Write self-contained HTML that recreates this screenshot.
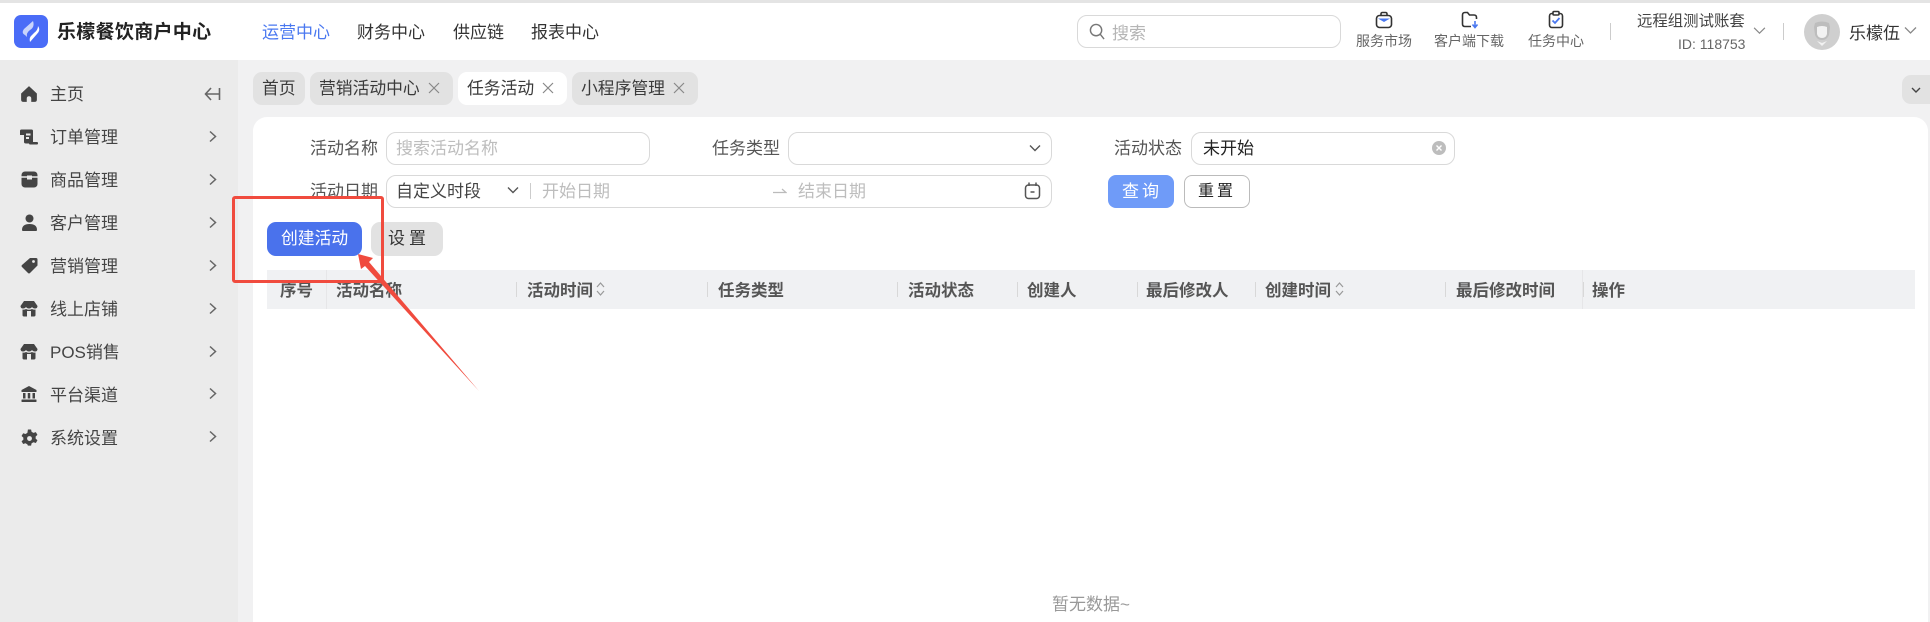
<!DOCTYPE html>
<html lang="zh"><head><meta charset="utf-8"><title>乐檬餐饮商户中心</title>
<style>
html,body{margin:0;padding:0;width:1930px;height:622px;overflow:hidden;background:#f1f1f2}
body{position:relative;font-family:"Liberation Sans","Noto Sans CJK SC",sans-serif;color:#333}
div,span,svg{position:absolute;box-sizing:border-box}
.t{white-space:nowrap;line-height:20px;height:20px;font-size:17px;margin-top:1px}
.side{font-size:17px;color:#444;left:50px}
.nav{font-size:17px;color:#333;top:22px}
.tab{top:72px;height:33px;background:#e2e2e2;border-radius:9px}
.tt{top:78px;font-size:16.800px;color:#3a3a3a}
.x{top:81px;width:14px;height:14px}
.lab{font-size:17px;color:#555}
.box{background:#fff;border:1px solid #d9d9d9;border-radius:10px}
.ph{color:#bdbdbd;font-size:17px}
.hd{top:280px;font-size:16.500px;font-weight:700;color:#555}
.dv{top:282px;width:1px;height:15px;background:#d8d8d8}
.ic{font-size:14px;color:#666;top:31px;margin-top:0}
</style></head><body>
<div style="left:0;top:0;width:1930px;height:3px;background:#e4e4e4"></div>
<div style="left:0;top:3px;width:1930px;height:57px;background:#fff"></div>
<div style="left:0;top:60px;width:238px;height:562px;background:#ebebeb"></div>

<!-- logo -->
<svg style="left:14px;top:15px" width="34" height="33" viewBox="0 0 34 33"><rect width="34" height="33" rx="7" fill="#4a6cf7"/><path d="M19 6 L10 14 Q7 18 11 20 L13 22 Q12 18 16 15 Q21 12 19 6Z" fill="#c9d4fb"/><path d="M24 11 Q27 15 23 19 L16 27 Q15 23 17 21 L20 18 Q24 15 24 11Z" fill="#fff"/></svg>
<span class="t" style="left:57px;top:22px;font-size:19px;font-weight:700;color:#222;letter-spacing:.3px">乐檬餐饮商户中心</span>
<span class="t nav" style="left:262px;color:#4a78f0">运营中心</span>
<span class="t nav" style="left:357px">财务中心</span>
<span class="t nav" style="left:453px">供应链</span>
<span class="t nav" style="left:531px">报表中心</span>

<!-- search -->
<div class="box" style="left:1077px;top:15px;width:264px;height:33px"></div>
<svg style="left:1089px;top:23px" width="16" height="17" viewBox="0 0 17 18" fill="none" stroke="#777" stroke-width="1.500"><circle cx="7.500" cy="7.500" r="6"/><path d="M12 12l4 5"/></svg>
<span class="t ph" style="left:1112px;top:23px;color:#b5b5b5">搜索</span>

<!-- top icons -->
<svg style="left:1375px;top:11px" width="18" height="18" viewBox="0 0 18 18" fill="none" stroke="#333" stroke-width="1.600"><rect x="1.500" y="4.500" width="15" height="12" rx="3"/><path d="M6 4.500V3q0-1.500 1.500-1.500h3Q12 1.500 12 3v1.500"/><path d="M3 7.500h12L9 11z" fill="#4a78f0" stroke="none"/></svg>
<span class="t ic" style="left:1356px">服务市场</span>
<svg style="left:1461px;top:11px" width="18" height="18" viewBox="0 0 18 18" fill="none" stroke="#333" stroke-width="1.600"><path d="M10 15.500H4q-2.500 0-2.500-2.500V4q0-2.500 2.500-2.500h2.500L8.500 4H13q2.500 0 2.500 2.500V8"/><path d="M14 10v6M11.500 13.500L14 16.500l2.500-3" stroke="#4a78f0"/></svg>
<span class="t ic" style="left:1434px">客户端下载</span>
<svg style="left:1547px;top:10px" width="18" height="19" viewBox="0 0 18 19" fill="none" stroke="#333" stroke-width="1.600"><rect x="2.500" y="3.500" width="13" height="14" rx="2.500"/><rect x="6" y="1.500" width="6" height="3.500" rx="1" fill="#fff"/><path d="M5.500 10.500l2.500 2.500 4.500-5" stroke="#4a78f0" stroke-width="1.800"/></svg>
<span class="t ic" style="left:1528px">任务中心</span>
<div style="left:1610px;top:23px;width:1px;height:17px;background:#ccc"></div>
<span class="t" style="left:1637px;top:11px;font-size:15.400px;color:#444">远程组测试账套</span>
<span class="t" style="left:1678px;top:34px;margin-top:0;font-size:14px;color:#666;width:67px;text-align:right">ID: 118753</span>
<svg style="left:1753px;top:26px" width="13" height="9" viewBox="0 0 14 10" fill="none" stroke="#888" stroke-width="1.300"><path d="M1 2l6 6 6-6"/></svg>
<div style="left:1783px;top:23px;width:1px;height:17px;background:#ccc"></div>
<svg style="left:1804px;top:14px" width="36" height="36" viewBox="0 0 36 36"><circle cx="18" cy="18" r="18" fill="#cfcfcf"/><path d="M11 9q7-3 14 0l1 4-1 8q-2 5-7 5t-7-5l-1-8z" fill="#bdbdbd"/><path d="M13 13q5-2 10 0v7q-1 4-5 4t-5-4z" fill="#f2f2f2"/><path d="M13 27l5 5 5-5-5 2z" fill="#f2f2f2"/></svg>
<span class="t" style="left:1849px;top:24px;margin-top:0;font-size:17px;color:#333">乐檬伍</span>
<svg style="left:1904px;top:26px" width="13" height="9" viewBox="0 0 13 9" fill="none" stroke="#888" stroke-width="1.300"><path d="M1 1.500l5.500 5.500 5.500-5.500"/></svg>

<!-- sidebar -->
<svg style="left:20px;top:85px" width="18" height="18" viewBox="0 0 16 16"><path d="M8 1L1 7.500V13q0 2 2 2h3v-3q0-2 2-2t2 2v3h3q2 0 2-2V7.500z" fill="#444"/></svg>
<span class="t side" style="top:84px">主页</span>
<svg style="left:204px;top:87px" width="17" height="14" viewBox="0 0 17 14" fill="none" stroke="#666" stroke-width="1.600"><path d="M7 1L1.500 7 7 13M1.500 7H15M15.500 1v12"/></svg>

<svg style="left:19px;top:129px" width="20" height="17" viewBox="0 0 20 17"><path d="M1 2q0-1.500 1.500-1.500h10q1.500 0 1.500 1.500v11q0 1.500 2 1.500H7q-2 0-2-1.500V6H1z" fill="#444"/><path d="M7 4.500h4.500v2H7zM7 8h3v2H7z" fill="#ebebeb"/><rect x="10" y="13" width="9" height="2.500" rx="1" fill="#444"/></svg>
<span class="t side" style="top:127px">订单管理</span>
<svg style="left:21px;top:171px" width="17" height="17" viewBox="0 0 17 17"><rect width="16" height="16" x=".5" y=".5" rx="3.500" fill="#444"/><path d="M.5 6h16" stroke="#ebebeb" stroke-width="1.500"/><rect x="6" y="4.500" width="5" height="4" fill="#ebebeb"/></svg>
<span class="t side" style="top:170px">商品管理</span>
<svg style="left:21px;top:214px" width="17" height="17" viewBox="0 0 17 17" fill="#444"><circle cx="8.500" cy="4.500" r="4"/><path d="M1 16q0-6 7.500-6t7.500 6q0 1-1 1H2q-1 0-1-1z"/></svg>
<span class="t side" style="top:213px">客户管理</span>
<svg style="left:21px;top:257px" width="17" height="17" viewBox="0 0 17 17"><path d="M9 1h6q1.500 0 1.500 1.500v6L9 16q-1 1-2 0L1 10q-1-1 0-2z" fill="#444"/><circle cx="12.500" cy="4.500" r="1.400" fill="#ebebeb"/></svg>
<span class="t side" style="top:256px">营销管理</span>
<svg style="left:20px;top:300px" width="18" height="17" viewBox="0 0 18 17"><path d="M4 1h10l3.500 5q0 2.500-2.500 2.500-2 0-3-1.500-1 1.500-3 1.500T6 7q-1 1.500-3 1.500Q.5 8.500.5 6z" fill="#444"/><path d="M2.500 9.500q2 .5 3.500-.5 3 1.500 6 0 1.500 1 3.500.5V15q0 1.500-1.500 1.500H4Q2.500 16.500 2.500 15z" fill="#444"/><rect x="7" y="11" width="4" height="5.500" fill="#ebebeb"/></svg>
<span class="t side" style="top:299px">线上店铺</span>
<svg style="left:20px;top:343px" width="18" height="17" viewBox="0 0 18 17"><path d="M4 1h10l3.500 5q0 2.500-2.500 2.500-2 0-3-1.500-1 1.500-3 1.500T6 7q-1 1.500-3 1.500Q.5 8.500.5 6z" fill="#444"/><path d="M2.500 9.500q2 .5 3.500-.5 3 1.500 6 0 1.500 1 3.500.5V15q0 1.500-1.500 1.500H4Q2.500 16.500 2.500 15z" fill="#444"/><rect x="7" y="11" width="4" height="5.500" fill="#ebebeb"/></svg>
<span class="t side" style="top:342px">POS销售</span>
<svg style="left:21px;top:386px" width="16" height="16" viewBox="0 0 16 16" fill="#444"><path d="M8 0L.5 4v2h15V4z"/><rect x="2" y="7" width="2.500" height="5.500"/><rect x="6.750" y="7" width="2.500" height="5.500"/><rect x="11.500" y="7" width="2.500" height="5.500"/><rect x=".5" y="13.500" width="15" height="2.500" rx=".5"/></svg>
<span class="t side" style="top:385px">平台渠道</span>
<svg style="left:21px;top:429px" width="17" height="18" viewBox="0 0 16 17"><path d="M6.500.5h3l.5 2.200 1.800 1 2.200-.7 1.500 2.600-1.700 1.500v2l1.700 1.500-1.500 2.600-2.200-.7-1.800 1-.5 2.200h-3L6 14.500l-1.800-1-2.200.7L.5 11.600l1.700-1.500v-2L.5 6.600 2 4l2.200.7 1.800-1z" fill="#444"/><circle cx="8" cy="9" r="2.300" fill="#ebebeb"/></svg>
<span class="t side" style="top:428px">系统设置</span>
<svg style="left:209px;top:130px" width="8" height="13" viewBox="0 0 8 12" fill="none" stroke="#666" stroke-width="1.500"><path d="M1 1l5.500 5L1 11"/></svg>
<svg style="left:209px;top:173px" width="8" height="13" viewBox="0 0 8 12" fill="none" stroke="#666" stroke-width="1.500"><path d="M1 1l5.500 5L1 11"/></svg>
<svg style="left:209px;top:216px" width="8" height="13" viewBox="0 0 8 12" fill="none" stroke="#666" stroke-width="1.500"><path d="M1 1l5.500 5L1 11"/></svg>
<svg style="left:209px;top:259px" width="8" height="13" viewBox="0 0 8 12" fill="none" stroke="#666" stroke-width="1.500"><path d="M1 1l5.500 5L1 11"/></svg>
<svg style="left:209px;top:302px" width="8" height="13" viewBox="0 0 8 12" fill="none" stroke="#666" stroke-width="1.500"><path d="M1 1l5.500 5L1 11"/></svg>
<svg style="left:209px;top:345px" width="8" height="13" viewBox="0 0 8 12" fill="none" stroke="#666" stroke-width="1.500"><path d="M1 1l5.500 5L1 11"/></svg>
<svg style="left:209px;top:387px" width="8" height="13" viewBox="0 0 8 12" fill="none" stroke="#666" stroke-width="1.500"><path d="M1 1l5.500 5L1 11"/></svg>
<svg style="left:209px;top:430px" width="8" height="13" viewBox="0 0 8 12" fill="none" stroke="#666" stroke-width="1.500"><path d="M1 1l5.500 5L1 11"/></svg>

<!-- tabs -->
<div class="tab" style="left:253px;width:52px"></div><span class="t tt" style="left:262px">首页</span>
<div class="tab" style="left:310px;width:143px"></div><span class="t tt" style="left:319px">营销活动中心</span>
<svg class="x" style="left:427px" viewBox="0 0 14 14" fill="none" stroke="#888" stroke-width="1.200"><path d="M2 2l10 10M12 2L2 12"/></svg>
<div class="tab" style="left:458px;width:109px;background:#fff"></div><span class="t tt" style="left:467px">任务活动</span>
<svg class="x" style="left:541px" viewBox="0 0 14 14" fill="none" stroke="#888" stroke-width="1.200"><path d="M2 2l10 10M12 2L2 12"/></svg>
<div class="tab" style="left:572px;width:126px"></div><span class="t tt" style="left:581px">小程序管理</span>
<svg class="x" style="left:672px" viewBox="0 0 14 14" fill="none" stroke="#888" stroke-width="1.200"><path d="M2 2l10 10M12 2L2 12"/></svg>
<div style="left:1902px;top:75px;width:28px;height:29px;background:#e2e2e2;border-radius:9px 0 0 9px"></div>
<svg style="left:1911px;top:87px" width="10" height="7" viewBox="0 0 10 7" fill="none" stroke="#444" stroke-width="1.400"><path d="M1 1l4 4 4-4"/></svg>

<!-- card -->
<div style="left:253px;top:117px;width:1675px;height:505px;background:#fff;border-radius:14px 14px 0 0"></div>

<span class="t lab" style="left:310px;top:138px">活动名称</span>
<div class="box" style="left:386px;top:132px;width:264px;height:33px"></div>
<span class="t ph" style="left:396px;top:138px">搜索活动名称</span>
<span class="t lab" style="left:712px;top:138px">任务类型</span>
<div class="box" style="left:788px;top:132px;width:264px;height:33px"></div>
<svg style="left:1029px;top:144px" width="12" height="9" viewBox="0 0 12 9" fill="none" stroke="#555" stroke-width="1.400"><path d="M1 1.500l5 5 5-5"/></svg>
<span class="t lab" style="left:1114px;top:138px">活动状态</span>
<div class="box" style="left:1191px;top:132px;width:264px;height:33px"></div>
<span class="t" style="left:1203px;top:138px;color:#222">未开始</span>
<svg style="left:1432px;top:141px" width="14" height="14" viewBox="0 0 14 14"><circle cx="7" cy="7" r="7" fill="#bdbdbd"/><path d="M4.500 4.500l5 5M9.500 4.500l-5 5" stroke="#fff" stroke-width="1.400"/></svg>

<span class="t lab" style="left:310px;top:181px">活动日期</span>
<div class="box" style="left:386px;top:175px;width:666px;height:33px"></div>
<span class="t" style="left:396px;top:181px;color:#444">自定义时段</span>
<svg style="left:507px;top:186px" width="12" height="9" viewBox="0 0 12 9" fill="none" stroke="#555" stroke-width="1.400"><path d="M1 1.500l5 5 5-5"/></svg>
<div style="left:530px;top:183px;width:1px;height:16px;background:#ccc"></div>
<span class="t ph" style="left:542px;top:181px">开始日期</span>
<svg style="left:773px;top:187px" width="14" height="8" viewBox="0 0 14 8" fill="none" stroke="#bbb" stroke-width="1.200"><path d="M0 5.500h13L9 2"/></svg>
<span class="t ph" style="left:798px;top:181px">结束日期</span>
<svg style="left:1024px;top:182px" width="17" height="18" viewBox="0 0 17 18" fill="none" stroke="#555" stroke-width="1.500"><rect x="1.500" y="3" width="14" height="13.500" rx="3"/><path d="M5 .5V4M12 .5V4M6.500 10h4"/></svg>

<div style="left:1108px;top:175px;width:66px;height:33px;background:#6f9bf8;border-radius:8px"></div>
<span class="t" style="left:1122px;top:181px;color:#fff;letter-spacing:3px">查询</span>
<div style="left:1184px;top:175px;width:66px;height:33px;background:#fff;border:1px solid #bbb;border-radius:8px"></div>
<span class="t" style="left:1198px;top:181px;font-size:16px;color:#222;letter-spacing:3px">重置</span>

<div style="left:267px;top:222px;width:95px;height:34px;background:#4a72ec;border-radius:9px"></div>
<span class="t" style="left:281px;top:228px;font-size:16.800px;color:#fff">创建活动</span>
<div style="left:371px;top:222px;width:72px;height:34px;background:#e2e2e2;border-radius:9px"></div>
<span class="t" style="left:388px;top:228px;font-size:17px;color:#333;letter-spacing:4px">设置</span>

<!-- table -->
<div style="left:267px;top:270px;width:1648px;height:39px;background:#f0f1f3"></div>
<div style="left:326px;top:270px;width:1px;height:39px;background:#e6e6e8"></div>
<div style="left:1582px;top:270px;width:1px;height:39px;background:#e6e6e8"></div>
<span class="t hd" style="left:280px">序号</span>
<span class="t hd" style="left:336px">活动名称</span>
<div class="dv" style="left:516px"></div><span class="t hd" style="left:527px">活动时间</span>
<svg style="left:596px;top:281px" width="9" height="16" viewBox="0 0 9 16" fill="none" stroke="#999" stroke-width="1.200"><path d="M1 6l3.500-4L8 6M1 10l3.500 4L8 10"/></svg>
<div class="dv" style="left:707px"></div><span class="t hd" style="left:718px">任务类型</span>
<div class="dv" style="left:897px"></div><span class="t hd" style="left:908px">活动状态</span>
<div class="dv" style="left:1017px"></div><span class="t hd" style="left:1027px">创建人</span>
<div class="dv" style="left:1137px"></div><span class="t hd" style="left:1146px">最后修改人</span>
<div class="dv" style="left:1255px"></div><span class="t hd" style="left:1265px">创建时间</span>
<svg style="left:1335px;top:281px" width="9" height="16" viewBox="0 0 9 16" fill="none" stroke="#999" stroke-width="1.200"><path d="M1 6l3.500-4L8 6M1 10l3.500 4L8 10"/></svg>
<div class="dv" style="left:1445px"></div><span class="t hd" style="left:1456px">最后修改时间</span>
<div class="dv" style="left:1583px"></div><span class="t hd" style="left:1592px">操作</span>

<span class="t" style="left:1052px;top:594px;font-size:17px;color:#999">暂无数据~</span>

<!-- annotation -->
<div style="left:232px;top:196px;width:152px;height:87px;border:3px solid #f04b3e;border-radius:3px"></div>
<svg style="left:0;top:0" width="1930" height="622" viewBox="0 0 1930 622"><polygon points="358,254 373,258 369,262 479,391 365,266 361,269" fill="#f04b3e"/></svg>
</body></html>
